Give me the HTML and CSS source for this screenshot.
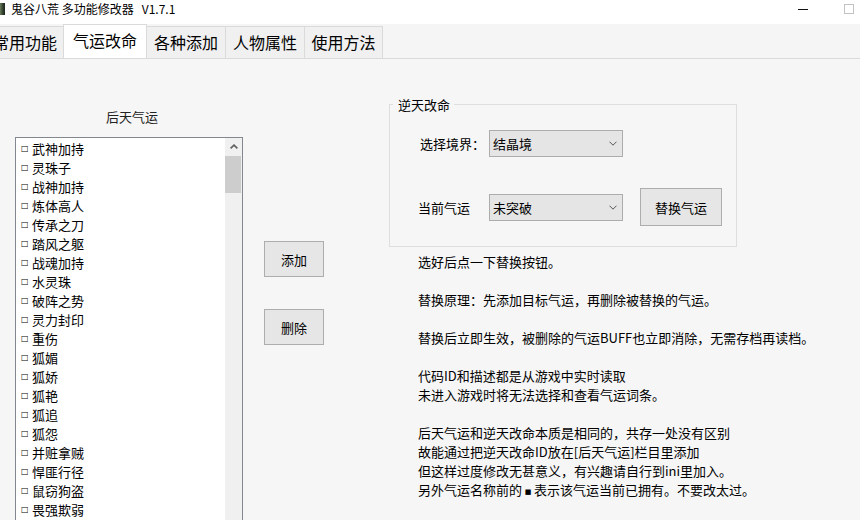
FILE: index.html
```html
<!DOCTYPE html>
<html lang="zh-CN">
<head>
    <meta charset="UTF-8">
    <meta name="viewport" content="width=device-width, initial-scale=1.0">
    <title>鬼谷八荒 多功能修改器</title>
    <link rel="stylesheet" href="styles.css">
</head>
<body>
    <div class="window">
        <div class="titlebar">
            <span class="app-icon"></span>
            <span class="title">鬼谷八荒 多功能修改器&nbsp;&nbsp; V1.7.1</span>
            <div class="caption-buttons">
                <span class="caption-btn">
                    <svg width="10" height="10" viewBox="0 0 10 10"><line x1="0" y1="5.5" x2="10" y2="5.5" stroke="#111" stroke-width="1"/></svg>
                </span>
                <span class="caption-btn">
                    <svg width="10" height="10" viewBox="0 0 10 10"><rect x="0.5" y="0.5" width="9" height="9" fill="none" stroke="#c2c2c2" stroke-width="1"/></svg>
                </span>
            </div>
        </div>

        <div class="tabs">
            <div class="tab tab-first">常用功能</div>
            <div class="tab active">气运改命</div>
            <div class="tab">各种添加</div>
            <div class="tab">人物属性</div>
            <div class="tab tab-last">使用方法</div>
        </div>

        <div class="page">
            <div class="col-list">
                <div class="list-title">后天气运</div>
                <div class="listbox">
                    <ul class="items">
                        <li><span class="box">□</span>武神加持</li>
                        <li><span class="box">□</span>灵珠子</li>
                        <li><span class="box">□</span>战神加持</li>
                        <li><span class="box">□</span>炼体高人</li>
                        <li><span class="box">□</span>传承之刀</li>
                        <li><span class="box">□</span>踏风之躯</li>
                        <li><span class="box">□</span>战魂加持</li>
                        <li><span class="box">□</span>水灵珠</li>
                        <li><span class="box">□</span>破阵之势</li>
                        <li><span class="box">□</span>灵力封印</li>
                        <li><span class="box">□</span>重伤</li>
                        <li><span class="box">□</span>狐媚</li>
                        <li><span class="box">□</span>狐娇</li>
                        <li><span class="box">□</span>狐艳</li>
                        <li><span class="box">□</span>狐追</li>
                        <li><span class="box">□</span>狐怨</li>
                        <li><span class="box">□</span>并赃拿贼</li>
                        <li><span class="box">□</span>悍匪行径</li>
                        <li><span class="box">□</span>鼠窃狗盗</li>
                        <li><span class="box">□</span>畏强欺弱</li>
                        <li><span class="box">□</span>贪生怕死</li>
                    </ul>
                    <div class="scrollbar">
                        <div class="scroll-arrow">
                            <svg width="8" height="5" viewBox="0 0 8 5"><polyline points="0.6,4.4 4,1.1 7.4,4.4" fill="none" stroke="#606060" stroke-width="1.6"/></svg>
                        </div>
                        <div class="scroll-thumb"></div>
                    </div>
                </div>
            </div>

            <div class="col-actions">
                <button type="button" class="btn btn-small">添加</button>
                <button type="button" class="btn btn-small">删除</button>
            </div>

            <div class="col-info">
                <div class="group">
                    <span class="legend">逆天改命</span>
                    <div class="row row-realm">
                        <span class="field-label label-realm">选择境界：</span>
                        <div class="combo">
                            <span>结晶境</span>
                            <svg width="8" height="5" viewBox="0 0 8 5"><polyline points="0.5,0.7 4,4.2 7.5,0.7" fill="none" stroke="#555" stroke-width="1"/></svg>
                        </div>
                    </div>
                    <div class="row row-luck">
                        <span class="field-label">当前气运</span>
                        <div class="combo">
                            <span>未突破</span>
                            <svg width="8" height="5" viewBox="0 0 8 5"><polyline points="0.5,0.7 4,4.2 7.5,0.7" fill="none" stroke="#555" stroke-width="1"/></svg>
                        </div>
                        <button type="button" class="btn btn-replace">替换气运</button>
                    </div>
                </div>

                <div class="notes">
                    <p>选好后点一下替换按钮。</p>
                    <p>替换原理：先添加目标气运，再删除被替换的气运。</p>
                    <p>替换后立即生效，被删除的气运BUFF也立即消除，无需存档再读档。</p>
                    <p>代码ID和描述都是从游戏中实时读取<br>未进入游戏时将无法选择和查看气运词条。</p>
                    <p>后天气运和逆天改命本质是相同的，共存一处没有区别<br>故能通过把逆天改命ID放在[后天气运]栏目里添加<br>但这样过度修改无甚意义，有兴趣请自行到ini里加入。<br>另外气运名称前的<span class="mark">■</span>表示该气运当前已拥有。不要改太过。</p>
                </div>
            </div>
        </div>
    </div>
</body>
</html>
```

FILE: styles.css
```css
html, body {
    margin: 0;
    height: 520px;
    overflow: hidden;
}
body {
    font-family: "Noto Sans CJK SC", "Microsoft YaHei", sans-serif;
    font-size: 13px;
    color: #000;
    background: #f6f6f6;
}
.window {
    width: 860px;
    height: 520px;
    overflow: hidden;
}

/* title bar */
.titlebar {
    height: 24px;
    background: #fff;
    display: flex;
    align-items: flex-start;
}
.app-icon {
    width: 5px;
    height: 12px;
    margin-top: 3px;
    background: linear-gradient(90deg, #6b7d5a 0, #2f3d2c 60%, #1d261c 100%);
}
.title {
    margin-left: 6px;
    font-size: 12px;
    line-height: 18px;
    white-space: nowrap;
}
.caption-buttons {
    margin-left: auto;
    margin-right: -12px;
    display: flex;
    flex-shrink: 0;
}
.caption-btn {
    width: 46px;
    height: 18px;
    display: flex;
    align-items: center;
    justify-content: center;
}

/* tabs */
.tabs {
    height: 34px;
    margin-left: -14px;
    display: flex;
    align-items: flex-end;
    border-bottom: 1px solid #dadada;
    background: #f5f5f5;
}
.tab {
    width: 80px;
    height: 32px;
    margin-right: -1px;
    box-sizing: border-box;
    border: 1px solid #dadada;
    border-bottom: none;
    background: #f0f0f0;
    font-size: 16px;
    line-height: 30px;
    text-align: center;
    white-space: nowrap;
    flex-shrink: 0;
}
.tab-first {
    width: 78px;
}
.tab-last {
    width: 79px;
}
.tab.active {
    width: 84px;
    height: 34px;
    line-height: 31px;
    background: #fff;
}

/* page */
.page {
    display: flex;
    align-items: flex-start;
}
.col-list {
    width: 228px;
    margin-left: 15px;
    flex-shrink: 0;
}
.list-title {
    margin-top: 48px;
    padding-left: 6px;
    line-height: 19px;
    text-align: center;
    color: #222;
}
.listbox {
    margin-top: 11px;
    height: 420px;
    display: flex;
    border: 1px solid #828790;
    background: #fff;
}
.items {
    flex: 1;
    list-style: none;
    margin: 0;
    padding: 1px 0 0 5px;
}
.items li {
    height: 19px;
    display: flex;
    align-items: center;
    white-space: nowrap;
}
.box {
    width: 11px;
    flex-shrink: 0;
    font-family: "DejaVu Sans", sans-serif;
    font-size: 8px;
    line-height: 1;
}
.scrollbar {
    width: 17px;
    background: #f0f0f0;
}
.scroll-arrow {
    height: 17px;
    display: flex;
    align-items: center;
    justify-content: center;
}
.scroll-thumb {
    height: 37px;
    margin: 1px 1px 0 0;
    background: #cdcdcd;
}

.col-actions {
    margin-left: 21px;
    padding-top: 182px;
    display: flex;
    flex-direction: column;
    gap: 32px;
    flex-shrink: 0;
}
.btn {
    box-sizing: border-box;
    border: 1px solid #adadad;
    border-radius: 0;
    background: #e6e6e6;
    font-family: inherit;
    font-size: 13px;
    color: #000;
    padding: 0;
}
.btn-small {
    width: 60px;
    height: 36px;
}

.col-info {
    margin-left: 65px;
    padding-top: 45px;
    flex-shrink: 0;
}
.group {
    position: relative;
    width: 348px;
    height: 143px;
    box-sizing: border-box;
    border: 1px solid #dedede;
    padding: 0 0 0 28px;
}
.legend {
    position: absolute;
    top: -10px;
    left: 3px;
    padding: 0 4px 0 5px;
    line-height: 19px;
    background: #f6f6f6;
}
.row {
    display: flex;
    align-items: center;
}
.row-realm {
    margin-top: 25px;
    height: 27px;
}
.row-luck {
    margin-top: 31px;
    height: 38px;
}
.field-label {
    width: 71px;
    line-height: 19px;
    white-space: nowrap;
    box-sizing: border-box;
}
.label-realm {
    padding-left: 2px;
}
.combo {
    width: 134px;
    height: 27px;
    box-sizing: border-box;
    border: 1px solid #acacac;
    background: #e5e5e5;
    padding: 0 5px 0 3px;
    display: flex;
    align-items: center;
    justify-content: space-between;
    line-height: 25px;
}
.btn-replace {
    width: 82px;
    height: 38px;
    margin-left: 17px;
}

.notes {
    margin: 5px 0 0 29px;
    white-space: nowrap;
}
.notes p {
    margin: 0 0 19px;
    line-height: 19px;
}
.mark {
    display: inline-block;
    width: 12px;
    text-align: center;
    font-family: "DejaVu Sans", sans-serif;
    font-size: 7px;
    vertical-align: 1px;
}
```
